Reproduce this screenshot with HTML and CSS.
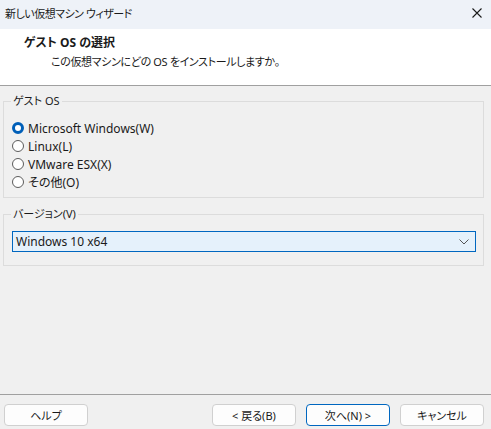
FILE: index.html
```html
<!DOCTYPE html>
<html lang="ja">
<head>
<meta charset="utf-8">
<link rel="stylesheet" href="styles.css">
</head>
<body>
<div class="window">
  <div class="titlebar">
    <span class="title">新しい仮想マシン ウィザード</span>
    <svg class="close" width="10" height="10" viewBox="0 0 10 10"><path d="M0.5 0.5 L9.5 9.5 M9.5 0.5 L0.5 9.5" stroke="#1a1a1a" stroke-width="1.1" fill="none"/></svg>
  </div>
  <div class="header">
    <div class="h-title">ゲスト OS の選択</div>
    <div class="h-sub">この仮想マシンにどの OS をインストールしますか。</div>
  </div>
  <div class="content">
    <fieldset class="group group-os">
      <legend>ゲスト OS</legend>
      <div class="radios">
        <label class="radio"><span class="dot checked"></span>Microsoft Windows(W)</label>
        <label class="radio"><span class="dot"></span>Linux(L)</label>
        <label class="radio"><span class="dot"></span>VMware ESX(X)</label>
        <label class="radio"><span class="dot"></span>その他(O)</label>
      </div>
    </fieldset>
    <fieldset class="group group-ver">
      <legend>バージョン(V)</legend>
      <div class="select">
        <span>Windows 10 x64</span>
        <svg class="chev" width="10" height="6" viewBox="0 0 10 6"><path d="M0.5 0.5 L5 5 L9.5 0.5" stroke="#555" stroke-width="1" fill="none"/></svg>
      </div>
    </fieldset>
  </div>
  <div class="footer">
    <button class="btn">ヘルプ</button>
    <div class="spacer"></div>
    <button class="btn">&lt; 戻る(B)</button>
    <button class="btn default">次へ(N) &gt;</button>
    <button class="btn">キャンセル</button>
  </div>
</div>
</body>
</html>
```
FILE: styles.css
```css
* { box-sizing: border-box; }
html, body { margin: 0; padding: 0; }
body {
  font-family: "Noto Sans", "Noto Sans CJK JP", sans-serif;
  font-size: 12px;
  font-feature-settings: "palt" 1;
  color: #1a1a1a;
  background: #f0f0f0;
}
.window {
  width: 491px;
  height: 429px;
  display: flex;
  flex-direction: column;
  background: #f0f0f0;
}
.titlebar {
  height: 29px;
  background: #eef2f8;
  display: flex;
  align-items: center;
  justify-content: space-between;
  padding: 0 9px 0 5px;
}
.title { font-size: 11px; letter-spacing: -0.5px; line-height: 16px; margin-top: -2px; }
.close { margin-top: -3px; }
.header {
  height: 57px;
  background: #ffffff;
  border-bottom: 1px solid #a0a0a0;
  padding-top: 6px;
}
.h-title {
  font-weight: bold;
  padding-left: 24px;
  line-height: 16px;
}
.h-sub {
  font-size: 11px;
  letter-spacing: -0.35px;
  padding-left: 51px;
  line-height: 16px;
  margin-top: 3px;
}
.content {
  flex: 1;
  padding: 7px 7px 0 3px;
  display: flex;
  flex-direction: column;
  gap: 8px;
}
.group {
  margin: 0;
  border: 1px solid #dcdcdc;
  padding: 0;
  min-width: 0;
}
.group legend {
  font-size: 11px;
  margin-left: 7px;
  padding: 0 2px;
  line-height: 16px;
}
.radios {
  display: flex;
  flex-direction: column;
  padding: 10px 0 6px 8px;
}
.radio {
  display: flex;
  align-items: center;
  height: 18px;
  gap: 4px;
}
.dot {
  width: 12px;
  height: 12px;
  border-radius: 50%;
  border: 1px solid #5c5c5c;
  background: #fff;
  flex: none;
}
.dot.checked {
  border: 3.5px solid #005fb8;
  background: #fff;
}
.select {
  margin: 9px 7px 13px 8px;
  height: 21px;
  border: 1px solid #0067c0;
  background: #e5f1fb;
  display: flex;
  align-items: center;
  justify-content: space-between;
  padding: 0 6px 0 3px;
}
.chev { margin-top: 1px; }
.footer {
  border-top: 1px solid #a0a0a0;
  height: 35px;
  display: flex;
  align-items: flex-start;
  padding: 9px 7px 0 4px;
  gap: 10px;
}
.spacer { flex: 1; }
.btn {
  width: 84px;
  height: 22px;
  font: inherit;
  font-size: 11px;
  font-feature-settings: "palt" 1;
  color: #1a1a1a;
  background: #fdfdfd;
  border: 1px solid #d0d0d0;
  border-radius: 4px;
  padding: 0;
}
.btn.default { border-color: #0067c0; }
```
